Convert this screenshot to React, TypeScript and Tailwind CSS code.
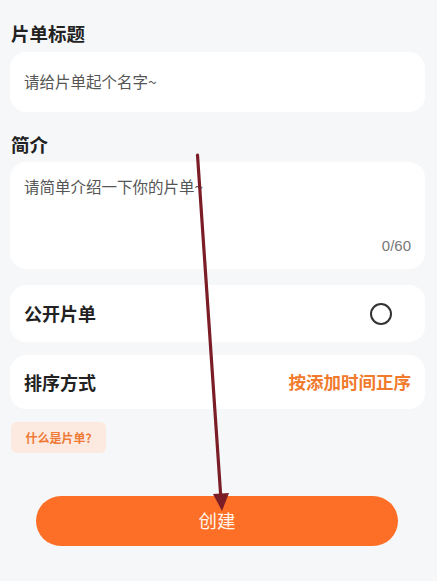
const cjk = { fontFamily: '"Noto Sans CJK SC", "Noto Sans", sans-serif' };

function Card({ children, className = '' }: { children: React.ReactNode; className?: string }) {
  return <div className={`ml-[10px] mr-[12px] rounded-[16px] bg-white ${className}`}>{children}</div>;
}

export default function App() {
  return (
    <div className="relative h-[581px] w-[437px] overflow-hidden bg-[#f6f7f9] text-[#222]" style={cjk}>
      <div className="flex flex-col pt-[20px]">
        <h2 className="mx-[11px] text-[18.5px] font-bold leading-[26px]">片单标题</h2>

        <Card className="mt-[6px] flex h-[60px] items-center px-[14px]">
          <span className="text-[15.5px] text-[#555]">请给片单起个名字~</span>
        </Card>

        <h2 className="mx-[11px] mt-[19px] text-[18.5px] font-bold leading-[26px]">简介</h2>

        <Card className="mt-[5px] flex h-[107px] flex-col px-[14px] pt-[12px]">
          <span className="text-[15.5px] leading-[24px] text-[#555]">请简单介绍一下你的片单~</span>
          <span className="mt-auto mb-[12px] self-end text-[15px] text-[#777]" style={{ fontFamily: '"Liberation Sans", sans-serif' }}>
            0/60
          </span>
        </Card>

        <Card className="mt-[16px] flex h-[57px] items-center justify-between px-[14px]">
          <span className="text-[18px] font-bold">公开片单</span>
          <span className="mr-[19px] h-[22px] w-[22px] rounded-full border-[2.5px] border-[#333]" />
        </Card>

        <Card className="mt-[13px] flex h-[54px] items-center justify-between px-[14px]">
          <span className="text-[18px] font-bold">排序方式</span>
          <span className="text-[17.5px] font-bold text-[#f17a2c]">按添加时间正序</span>
        </Card>

        <div className="mx-[11px] mt-[13px] flex h-[31px] w-[95px] items-center justify-center rounded-[6px] bg-[#fce9df]">
          <span className="text-[12px] font-bold text-[#ee7a35]">什么是片单?</span>
        </div>

        <button className="ml-[36px] mt-[43px] flex h-[50px] w-[362px] items-center justify-center rounded-full bg-[#fd6e26] text-[18.5px] text-[#fff5ea]">
          创建
        </button>
      </div>

      {/* annotation arrow */}
      <svg className="pointer-events-none absolute left-0 top-0" width="437" height="581" viewBox="0 0 437 581">
        <line x1="197.5" y1="155" x2="221" y2="500" stroke="#7b1d26" strokeWidth="3.2" strokeLinecap="round" />
        <polygon points="213,494 229,493 222,511" fill="#7b1d26" />
      </svg>
    </div>
  );
}
